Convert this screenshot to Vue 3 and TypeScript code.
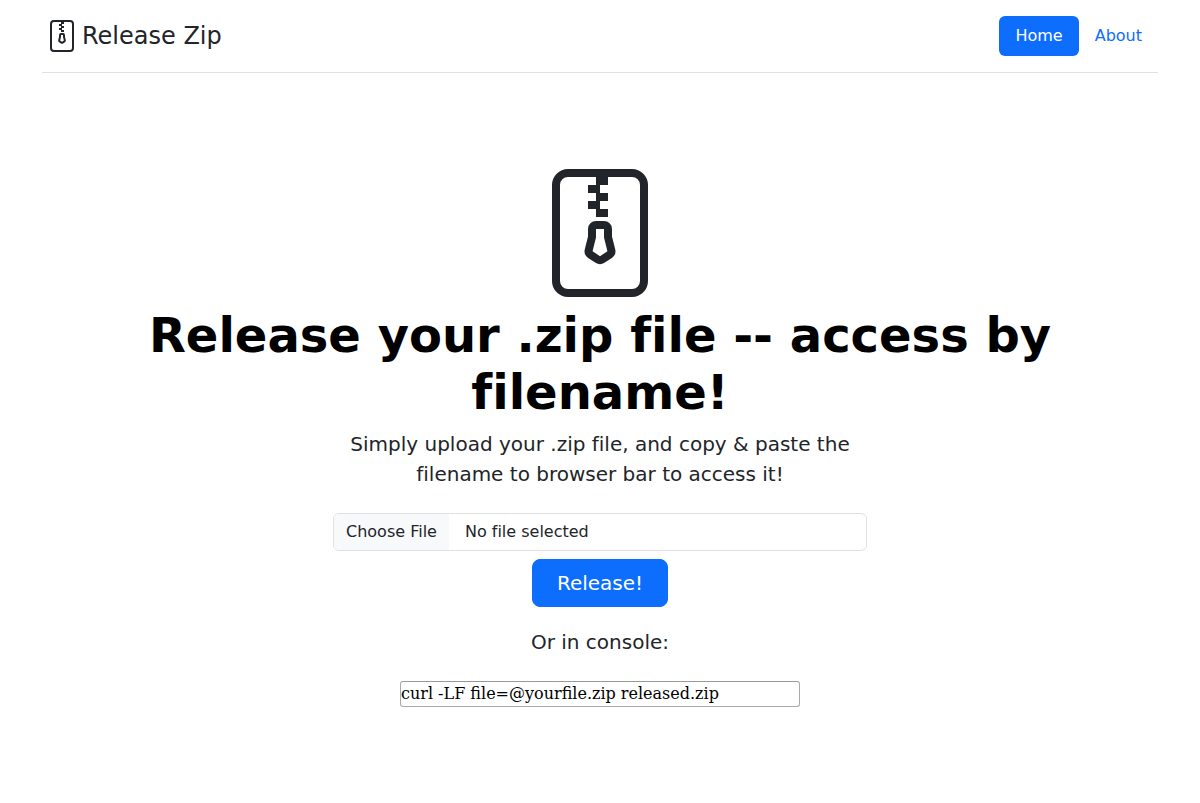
<script setup lang="ts">
import { ref } from 'vue'

const fileName = ref<string>('No file selected')
const command = ref<string>('curl -LF file=@yourfile.zip released.zip')

function onPick(event: Event): void {
  const files = (event.target as HTMLInputElement).files
  fileName.value = files && files.length ? files[0].name : 'No file selected'
}
</script>

<template>
  <div class="page">
    <header class="header">
      <a href="#" class="brand">
        <svg class="brand-icon" viewBox="0 0 16 16" fill="currentColor" aria-hidden="true">
          <path d="M6.5 7.5a1 1 0 0 1 1-1h1a1 1 0 0 1 1 1v.938l.4 1.599a1 1 0 0 1-.416 1.074l-.93.62a1 1 0 0 1-1.109 0l-.93-.62a1 1 0 0 1-.415-1.074l.4-1.599V7.5zm2 0h-1v.938a1 1 0 0 1-.03.243l-.4 1.598.93.62.93-.62-.4-1.598a1 1 0 0 1-.03-.243V7.5z" />
          <path d="M2 2a2 2 0 0 1 2-2h8a2 2 0 0 1 2 2v12a2 2 0 0 1-2 2H4a2 2 0 0 1-2-2V2zm5.5-1H4a1 1 0 0 0-1 1v12a1 1 0 0 0 1 1h8a1 1 0 0 0 1-1V2a1 1 0 0 0-1-1H9v1H8v1h1v1H8v1h1v1H7.5V5h-1V4h1V3h-1V2h1V1z" />
        </svg>
        <span>Release Zip</span>
      </a>
      <nav class="nav">
        <a href="#" class="nav-link active" aria-current="page">Home</a>
        <a href="#about" class="nav-link">About</a>
      </nav>
    </header>

    <main class="hero">
      <svg class="hero-icon" viewBox="0 0 16 16" fill="currentColor" aria-hidden="true">
        <path d="M6.5 7.5a1 1 0 0 1 1-1h1a1 1 0 0 1 1 1v.938l.4 1.599a1 1 0 0 1-.416 1.074l-.93.62a1 1 0 0 1-1.109 0l-.93-.62a1 1 0 0 1-.415-1.074l.4-1.599V7.5zm2 0h-1v.938a1 1 0 0 1-.03.243l-.4 1.598.93.62.93-.62-.4-1.598a1 1 0 0 1-.03-.243V7.5z" />
        <path d="M2 2a2 2 0 0 1 2-2h8a2 2 0 0 1 2 2v12a2 2 0 0 1-2 2H4a2 2 0 0 1-2-2V2zm5.5-1H4a1 1 0 0 0-1 1v12a1 1 0 0 0 1 1h8a1 1 0 0 0 1-1V2a1 1 0 0 0-1-1H9v1H8v1h1v1H8v1h1v1H7.5V5h-1V4h1V3h-1V2h1V1z" />
      </svg>
      <h1>Release your .zip file -- access by filename!</h1>
      <div class="content">
        <p class="lead">Simply upload your .zip file, and copy &amp; paste the filename to browser bar to access it!</p>
        <form class="upload" @submit.prevent>
          <label class="file" for="zip-file">
            <span class="file-button">Choose File</span>
            <span class="file-name">{{ fileName }}</span>
            <input id="zip-file" class="file-input" type="file" accept=".zip" @change="onPick" />
          </label>
          <button type="submit" class="release">Release!</button>
        </form>
        <div class="console">
          <label class="lead" for="command">Or in console:</label>
          <input id="command" v-model="command" class="command" type="text" readonly />
        </div>
      </div>
    </main>
  </div>
</template>

<style>
body {
  margin: 0;
  background: #fff;
}
</style>

<style scoped>
.page,
.page * {
  box-sizing: border-box;
}

.page {
  max-width: 1140px;
  margin: 0 auto;
  padding: 0 12px;
  color: #212529;
  font-family: "DejaVu Sans", sans-serif;
  font-size: 16px;
  font-variant-ligatures: none;
  line-height: 24px;
}

.header {
  display: flex;
  flex-wrap: wrap;
  align-items: center;
  justify-content: space-between;
  padding: 16px 0;
  border-bottom: 1px solid #dee2e6;
}

.brand {
  display: flex;
  align-items: center;
  gap: 4px;
  padding-left: 4px;
  color: #212529;
  font-size: 24px;
  line-height: 36px;
  text-decoration: none;
}

.brand-icon {
  width: 32px;
  height: 32px;
}

.nav {
  display: flex;
}

.nav-link {
  padding: 8px 16px;
  border-radius: 6px;
  color: #0d6efd;
  text-decoration: none;
}

.nav-link.active {
  background: #0d6efd;
  color: #fff;
}

.hero {
  display: flex;
  flex-direction: column;
  align-items: center;
  padding: 96px 24px 48px;
  text-align: center;
}

.hero-icon {
  width: 128px;
  height: 128px;
}

h1 {
  margin: 10px 0 8px;
  color: #000;
  font-size: 48px;
  font-weight: 700;
  line-height: 57px;
}

.content {
  width: 50%;
  min-width: 300px;
}

.lead {
  margin: 0;
  font-size: 20px;
  line-height: 30px;
}

.upload,
.console {
  display: flex;
  flex-direction: column;
  align-items: center;
}

.upload {
  gap: 8px;
  padding: 24px 0 20px;
}

.console {
  gap: 24px;
}

.file {
  position: relative;
  display: flex;
  width: 100%;
  overflow: hidden;
  border: 1px solid #dee2e6;
  border-radius: 6px;
  text-align: left;
}

.file-button {
  padding: 6px 12px;
  background: #f8f9fa;
}

.file-name {
  padding: 6px 16px;
}

.file-input {
  position: absolute;
  inset: 0;
  width: 100%;
  opacity: 0;
}

.release {
  padding: 8px 24px;
  border: 1px solid #0d6efd;
  border-radius: 8px;
  background: #0d6efd;
  color: #fff;
  font: inherit;
  font-size: 20px;
  line-height: 30px;
}

.command {
  width: 400px;
  max-width: 100%;
  padding: 1px 0;
  border: 1px solid #aaa;
  border-top-color: #999;
  border-radius: 3px;
  background: #fff;
  color: #000;
  font-family: "DejaVu Serif", serif;
  font-size: 16px;
  font-variant-ligatures: normal;
  line-height: 22px;
}
</style>
